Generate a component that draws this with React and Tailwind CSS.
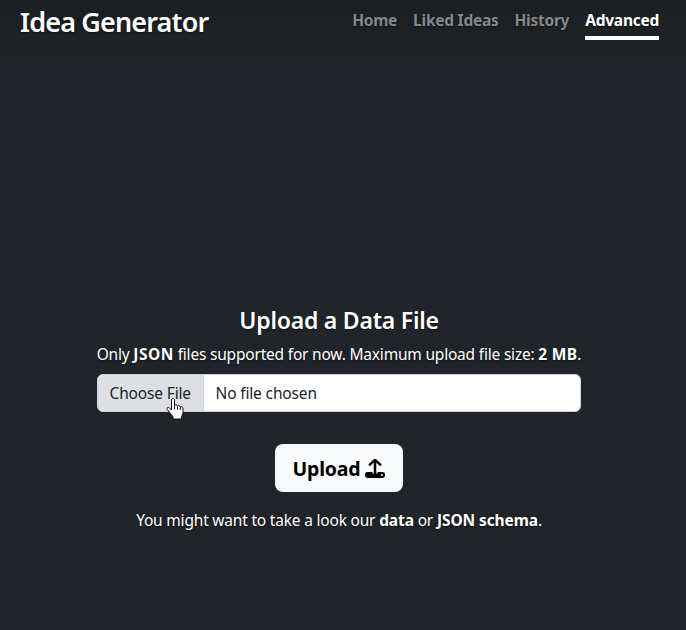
import React from "react";

function UploadIcon() {
  return (
    <svg className="mt-px h-5 w-5" viewBox="0 0 20 20" fill="none">
      <rect x="0" y="13" width="20" height="6" rx="2.4" fill="#000" />
      <path d="M10 3v11.6" stroke="#f8f9fa" strokeWidth="5" />
      <path d="M10 1.2v14.8M4.8 5.6 10 .9l5.2 4.7" stroke="#000" strokeWidth="2.5" strokeLinecap="round" strokeLinejoin="round" />
      <path d="M7 14.8h6V19H7z" fill="#000" />
      <circle cx="16.8" cy="16" r="1" fill="#f8f9fa" />
    </svg>
  );
}

function HandCursor() {
  return (
    <svg className="absolute left-[68px] top-[22px] h-[24px] w-[18px]" viewBox="0 0 18 24">
      <path
        d="M5.5 13V3.2C5.5.9 8.5.9 8.5 3.2v5.3c.5-1 2.7-.8 3 .6.7-.8 2.6-.5 2.8.9 1-.7 2.7 0 2.7 1.6v4.2c0 2-1.6 3-1.6 4.6V22H7v-1.8c0-1.4-2.2-2.6-3.3-4.6L1.2 12.3C.3 10.7 2 9.8 3.2 10.7z"
        fill="#fff"
        stroke="#111"
        strokeWidth="1"
        strokeLinejoin="round"
      />
      <path d="M8.5 8.5v4M11.5 9.4v3.3M14.3 10.2v2.8" stroke="#111" strokeWidth="1" />
    </svg>
  );
}

const links = ["Home", "Liked Ideas", "History"];

export default function App() {
  return (
    <div className="flex h-[630px] w-[686px] flex-col overflow-hidden bg-[#212428] bg-linear-to-b from-[#1c1f21] to-[#212428] to-[64px] font-['Noto_Sans',sans-serif] text-base text-white">
      <header className="flex h-[40px] items-start justify-between pl-[20px] pr-[27px] text-shadow-[0_1px_2px_rgb(0_0_0/0.5)]">
        <h3 className="mt-[5px] text-[27px] leading-[34px] font-semibold tracking-[-0.85px] whitespace-nowrap">Idea Generator</h3>
        <nav className="mt-2 flex gap-4 text-[15.5px] leading-6 font-bold tracking-[-0.25px] whitespace-nowrap text-[#868788]">
          {links.map((label) => (
            <a key={label}>{label}</a>
          ))}
          <a className="h-8 border-b-4 border-white text-white">Advanced</a>
        </nav>
      </header>
      <main className="mt-[266px] flex w-[678px] flex-col items-center text-shadow-[0_1px_2px_rgb(0_0_0/0.5)]">
        <h4 className="text-[23px] leading-[29px] font-semibold tracking-[-0.22px] whitespace-nowrap">Upload a Data File</h4>
        <p className="mt-[7px] text-[15.5px] leading-6 tracking-[-0.2px] whitespace-nowrap">
          Only <b className="tracking-[0.5px]">JSON</b> files supported for now. Maximum upload file size: <b className="tracking-[0.3px]">2 MB</b>.
        </p>
        <div className="relative mt-2 mr-[1px] flex h-[38px] w-[484px] items-stretch rounded-md border border-[#ced4da] bg-white leading-9 tracking-[-0.15px] text-[#212529] text-shadow-none">
          <span className="w-[106px] rounded-l-[5px] border-r border-[#ced4da] bg-[#dddfe3] pl-3 text-[15.5px] whitespace-nowrap">Choose File</span>
          <span className="pl-3 text-[15.5px] whitespace-nowrap">No file chosen</span>
          <HandCursor />
        </div>
        <button className="mt-8 flex h-12 w-32 items-center justify-center gap-[5px] rounded-lg bg-[#f8f9fa] pt-px text-[19.5px] font-bold tracking-[-0.2px] text-black text-shadow-none">
          Upload
          <UploadIcon />
        </button>
        <p className="mt-4 text-[15.5px] leading-6 tracking-[-0.2px] whitespace-nowrap">
          You might want to take a look our <b className="tracking-[-0.1px]">data</b> or <b className="tracking-[-0.1px]">JSON schema</b>.
        </p>
      </main>
    </div>
  );
}
